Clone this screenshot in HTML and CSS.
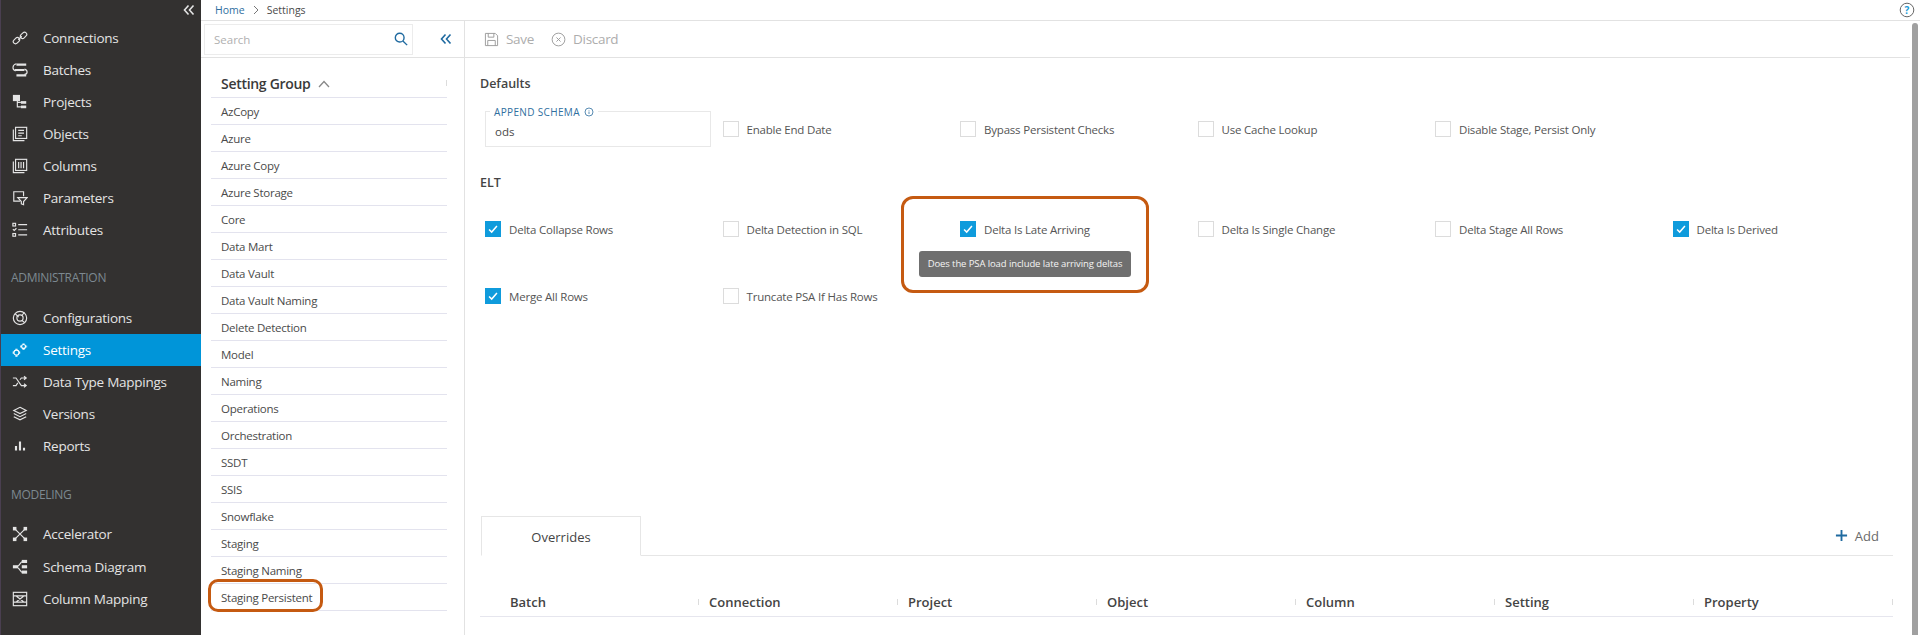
FILE: index.html
```html
<!DOCTYPE html>
<html lang="en">
<head>
<meta charset="UTF-8">
<meta name="viewport" content="width=device-width, initial-scale=1.0">
<title>Settings</title>
<link rel="stylesheet" href="styles.css">
</head>
<body>

<div class="app">
    <aside class="sidebar">
        <div class="sidebar-top">
            <svg class="collapse" viewBox="0 0 12 12"><path d="M5.500 1.500 1.500 6l4 4.500M10.500 1.500 6.500 6l4 4.500"/></svg>
        </div>
        <nav class="nav-group">
            <a class="nav-item"><svg viewBox="0 0 18 18"><rect x="1" y="9.500" width="8" height="5" rx="2.500" transform="rotate(-45 5 12)"/><rect x="9" y="3.500" width="8" height="5" rx="2.500" transform="rotate(-45 13 6)"/><path d="M7 11l4-4"/></svg>Connections</a>
            <a class="nav-item"><svg viewBox="0 0 18 18"><path class="thick" d="M5 3h11M3 9h11M5 15h11"/><path d="M5 2C0 3 0 9 4 10M14 8c4 1 4 6 0 6"/></svg>Batches</a>
            <a class="nav-item"><svg viewBox="0 0 18 18"><rect class="solid" x="1" y="1" width="8" height="7"/><rect class="solid" x="10" y="8" width="6" height="3"/><rect class="solid" x="10" y="13" width="6" height="3"/><path d="M6 8v6.500h4M6 9.500h4"/></svg>Projects</a>
            <a class="nav-item"><svg viewBox="0 0 18 18"><rect x="4" y="1.500" width="12.500" height="12.500"/><path d="M1.500 4v12.500h12.500M7 5h6.500M7 8h6.500M7 11h4"/></svg>Objects</a>
            <a class="nav-item"><svg viewBox="0 0 18 18"><rect x="4" y="1.500" width="12.500" height="12.500"/><path d="M1.500 4v12.500h12.500M7.500 4.500v7M10.200 4.500v7M13 4.500v7"/></svg>Columns</a>
            <a class="nav-item"><svg viewBox="0 0 18 18"><path d="M9 12.500H2V2h11v5"/><path d="M6.500 8.500h10.500l-4 4.500v3.500l-2.500-1V13z"/></svg>Parameters</a>
            <a class="nav-item"><svg viewBox="0 0 18 18"><rect x="1" y="1.500" width="3" height="3"/><rect x="1" y="13" width="3" height="3"/><path d="M1 8l1.500 1.500L5 7M7 3h10M7 8.700h10M7 14.500h10"/></svg>Attributes</a>
        </nav>
        <div class="nav-heading">ADMINISTRATION</div>
        <nav class="nav-group">
            <a class="nav-item"><svg viewBox="0 0 18 18"><circle cx="9" cy="9" r="7.500"/><circle cx="9" cy="9" r="3.500"/><path d="M3.500 4l4 4M11 6.500l3-4M11 11.500l3.500 3"/></svg>Configurations</a>
            <a class="nav-item active"><svg viewBox="0 0 18 18"><circle cx="5" cy="12" r="2.800"/><circle cx="13" cy="5" r="2.200"/><path class="thick" d="M5 7.500v1.200M5 15.300v1.200M.8 12H2M8 12h1.200M13 1v.8M13 8.200V9M9 5h.8M16.200 5h.8"/></svg>Settings</a>
            <a class="nav-item"><svg viewBox="0 0 18 18"><path d="M1 4.500h3.500l6 8.500h5M1 13h3.500l2-3M9 6.500l1.500-2h5M13.500 2.500l2.500 2-2.500 2M13.500 11l2.500 2-2.500 2"/></svg>Data Type Mappings</a>
            <a class="nav-item"><svg viewBox="0 0 18 18"><path d="M9 1.500 16 5l-7 3.500L2 5zM2 8.500 9 12l7-3.500M2 12l7 3.500 7-3.500"/></svg>Versions</a>
            <a class="nav-item"><svg viewBox="0 0 18 18"><path class="thick" d="M4.500 14V9M9 14V4M13.500 14v-3"/></svg>Reports</a>
        </nav>
        <div class="nav-heading nav-heading-second">MODELING</div>
        <nav class="nav-group">
            <a class="nav-item"><svg viewBox="0 0 18 18"><path d="M4 4l10 10M14 4 4 14"/><rect class="solid" x="1" y="1" width="4" height="4"/><rect class="solid" x="13" y="1" width="4" height="4"/><rect class="solid" x="1" y="13" width="4" height="4"/><rect class="solid" x="13" y="13" width="4" height="4"/></svg>Accelerator</a>
            <a class="nav-item nav-item-tall"><svg viewBox="0 0 18 18"><rect class="solid" x="1" y="7" width="6" height="3.500"/><rect class="solid" x="11" y="1" width="6" height="3.500"/><rect class="solid" x="11" y="7" width="6" height="3.500"/><rect class="solid" x="11" y="13" width="6" height="3.500"/><path d="M7 8l4-5M7 10l4 5"/></svg>Schema Diagram</a>
            <a class="nav-item"><svg viewBox="0 0 18 18"><rect x="1.500" y="1.500" width="15" height="15"/><path d="M1.500 5.500h15M1.500 12.500h15M5 6l8 6M13 6l-8 6"/></svg>Column Mapping</a>
        </nav>
    </aside>

    <div class="content">
        <header class="crumbs">
            <a class="crumb-link">Home</a>
            <svg class="crumb-sep" viewBox="0 0 8 10"><path d="M2 1l4 4-4 4"/></svg>
            <span>Settings</span>
            <svg class="help" viewBox="0 0 16 16"><circle cx="8" cy="8" r="6.800"/><text x="8" y="11.500" text-anchor="middle">?</text></svg>
        </header>

        <div class="panels">
            <section class="groups">
                <div class="groups-search">
                    <div class="search-box">
                        <span>Search</span>
                        <svg viewBox="0 0 16 16"><circle cx="6.500" cy="6.500" r="5"/><path d="M10.200 10.200 15 15"/></svg>
                    </div>
                    <svg class="groups-collapse" viewBox="0 0 12 12"><path d="M5.500 1.500 1.500 6l4 4.500M10.500 1.500 6.500 6l4 4.500"/></svg>
                </div>
                <div class="groups-head">
                    <span>Setting Group</span>
                    <svg viewBox="0 0 12 8"><path d="M1 7l5-5.500L11 7"/></svg>
                    <i class="tick"></i>
                </div>
                <ul class="groups-list">
                    <li>AzCopy</li>
                    <li>Azure</li>
                    <li>Azure Copy</li>
                    <li>Azure Storage</li>
                    <li>Core</li>
                    <li>Data Mart</li>
                    <li>Data Vault</li>
                    <li>Data Vault Naming</li>
                    <li>Delete Detection</li>
                    <li>Model</li>
                    <li>Naming</li>
                    <li>Operations</li>
                    <li>Orchestration</li>
                    <li>SSDT</li>
                    <li>SSIS</li>
                    <li>Snowflake</li>
                    <li>Staging</li>
                    <li>Staging Naming</li>
                    <li class="marked">Staging Persistent</li>
                </ul>
            </section>

            <main class="detail">
                <div class="toolbar">
                    <a class="tool"><svg viewBox="0 0 16 16"><path d="M1.500 1.500h10.500l2.500 2.500v10.500h-13zM4.500 1.500v4h6v-4M4 14.500V9h8v5.500"/></svg>Save</a>
                    <a class="tool"><svg viewBox="0 0 16 16"><circle cx="8" cy="8" r="6.800"/><path d="M5.800 5.800l4.400 4.400M10.200 5.800l-4.400 4.400"/></svg>Discard</a>
                </div>

                <h4 class="section-title">Defaults</h4>
                <div class="options options-defaults">
                    <div class="field">
                        <label class="field-label">APPEND SCHEMA <svg viewBox="0 0 10 10"><circle cx="5" cy="5" r="4"/><path d="M5 4.500v2.500M5 3v.6"/></svg></label>
                        <div class="field-value">ods</div>
                    </div>
                    <label class="option"><span class="box"></span>Enable End Date</label>
                    <label class="option"><span class="box"></span>Bypass Persistent Checks</label>
                    <label class="option"><span class="box"></span>Use Cache Lookup</label>
                    <label class="option"><span class="box"></span>Disable Stage, Persist Only</label>
                </div>

                <h4 class="section-title section-elt">ELT</h4>
                <div class="options options-elt">
                    <label class="option"><span class="box checked"><svg viewBox="0 0 16 16"><path d="M3.500 8.500l3 3 6-7"/></svg></span>Delta Collapse Rows</label>
                    <label class="option"><span class="box"></span>Delta Detection in SQL</label>
                    <label class="option has-tip">
                        <span class="box checked"><svg viewBox="0 0 16 16"><path d="M3.500 8.500l3 3 6-7"/></svg></span>Delta Is Late Arriving
                        <span class="tip">Does the PSA load include late arriving deltas</span>
                        <span class="callout"></span>
                    </label>
                    <label class="option"><span class="box"></span>Delta Is Single Change</label>
                    <label class="option"><span class="box"></span>Delta Stage All Rows</label>
                    <label class="option"><span class="box checked"><svg viewBox="0 0 16 16"><path d="M3.500 8.500l3 3 6-7"/></svg></span>Delta Is Derived</label>
                    <label class="option"><span class="box checked"><svg viewBox="0 0 16 16"><path d="M3.500 8.500l3 3 6-7"/></svg></span>Merge All Rows</label>
                    <label class="option"><span class="box"></span>Truncate PSA If Has Rows</label>
                </div>

                <div class="tabs">
                    <div class="tab">Overrides</div>
                    <a class="add"><svg viewBox="0 0 14 14"><path d="M7 1v12M1 7h12"/></svg>Add</a>
                </div>
                <div class="override-head">
                    <span>Batch</span>
                    <span>Connection</span>
                    <span>Project</span>
                    <span>Object</span>
                    <span>Column</span>
                    <span>Setting</span>
                    <span>Property</span>
                </div>
            </main>
            <div class="scrollbar"></div>
        </div>
    </div>
</div>

</body>
</html>
```

FILE: styles.css
```css
* {
    box-sizing: border-box;
}
html, body {
    margin: 0;
    height: 635px;
    overflow: hidden;
}
body {
    font-family: "Open Sans", "Noto Sans", sans-serif;
    font-size: 12px;
    color: #4a4a4a;
    background-color: #fff;
}
svg {
    fill: none;
    stroke: currentColor;
    stroke-width: 1.3;
}
.app {
    display: flex;
    height: 635px;
}

/* sidebar */
.sidebar {
    width: 201px;
    flex: none;
    background-color: #333130;
    border-left: 1px solid #4a3f50;
    color: #e4e4e4;
}
.sidebar-top {
    height: 22px;
    display: flex;
    justify-content: flex-end;
    padding: 4px 6px 0 0;
}
.collapse {
    width: 12px;
    height: 12px;
    stroke-width: 1.6;
}
.nav-group {
    display: flex;
    flex-direction: column;
}
.nav-item {
    height: 32px;
    display: flex;
    align-items: center;
    gap: 15px;
    padding-left: 11px;
    font-size: 13.5px;
    letter-spacing: -0.25px;
}
.nav-item-tall {
    height: 33px;
}
.nav-item svg {
    width: 16px;
    height: 16px;
    flex: none;
}
.nav-item.active {
    background-color: #0095d9;
    color: #fff;
}
.thick {
    stroke-width: 2.4;
}
.solid {
    fill: currentColor;
    stroke: none;
}
.nav-heading {
    height: 16px;
    line-height: 16px;
    margin: 24px 0 16px;
    padding-left: 10px;
    font-size: 12px;
    letter-spacing: -0.3px;
    color: #7d8990;
}
.nav-heading-second {
    margin: 25px 0 15px;
}

/* header */
.content {
    flex: 1;
    min-width: 0;
    display: flex;
    flex-direction: column;
}
.crumbs {
    height: 21px;
    flex: none;
    display: flex;
    align-items: center;
    gap: 7px;
    padding: 0 5px 0 14px;
    border-bottom: 1px solid #e2e2e2;
    font-size: 10.500px;
}
.crumb-link {
    color: #2f6f9f;
}
.crumb-sep {
    width: 8px;
    height: 10px;
    color: #777;
    stroke-width: 1;
}
.help {
    width: 16px;
    height: 16px;
    margin-left: auto;
    color: #666;
    stroke-width: 1;
}
.help text {
    font-size: 10px;
    font-weight: 700;
    fill: #1c9ad6;
    stroke: none;
}
.panels {
    flex: 1;
    display: flex;
    min-height: 0;
}

/* setting groups */
.groups {
    width: 264px;
    flex: none;
    border-right: 1px solid #e2e2e2;
}
.groups-search {
    height: 37px;
    display: flex;
    align-items: center;
    border-bottom: 1px solid #e2e2e2;
    padding: 0 0 0 3px;
}
.search-box {
    width: 209px;
    height: 31px;
    display: flex;
    align-items: center;
    justify-content: space-between;
    padding: 0 4px 0 9px;
    border: 1px solid #ececec;
    font-size: 11.500px;
    color: #b0b0b0;
}
.search-box svg {
    width: 14px;
    height: 14px;
    color: #1f6aa0;
    stroke-width: 1.6;
}
.groups-collapse {
    width: 12px;
    height: 12px;
    margin-left: 27px;
    color: #1f6aa0;
    stroke-width: 1.6;
}
.groups-head {
    position: relative;
    height: 40px;
    margin: 0 17px 0 10px;
    padding: 12px 0 0 10px;
    display: flex;
    align-items: center;
    gap: 7px;
    border-bottom: 1px solid #e3e3ee;
    font-size: 14px;
    font-weight: 600;
    letter-spacing: -0.3px;
    color: #3a3a3a;
}
.groups-head svg {
    width: 12px;
    height: 8px;
    color: #888;
}
.tick {
    position: absolute;
    right: 0;
    top: 22px;
    width: 1px;
    height: 6px;
    background-color: #dcdcdc;
}
.groups-list {
    list-style: none;
    margin: 0 17px 0 10px;
    padding: 0;
}
.groups-list li {
    height: 27px;
    line-height: 27px;
    padding-left: 10px;
    border-bottom: 1px solid #e3e3ee;
    font-size: 11.500px;
    letter-spacing: -0.25px;
}
.groups-list .marked {
    position: relative;
}
.groups-list .marked::after {
    content: "";
    position: absolute;
    left: -3px;
    top: -5px;
    width: 115px;
    height: 33px;
    box-sizing: border-box;
    border: 3px solid #c55a11;
    border-radius: 10px;
}

/* detail */
.detail {
    flex: 1;
    min-width: 0;
    padding-right: 2px;
}
.toolbar {
    height: 37px;
    display: flex;
    align-items: center;
    gap: 17px;
    padding-left: 19px;
    border-bottom: 1px solid #e2e2e2;
}
.tool {
    display: flex;
    align-items: center;
    gap: 7px;
    font-size: 13.500px;
    letter-spacing: -0.3px;
    color: #adadad;
}
.tool svg {
    width: 15px;
    height: 15px;
    color: #9a9a9a;
    stroke-width: 1;
}
.section-title {
    margin: 16px 0 0 15px;
    height: 20px;
    line-height: 20px;
    font-size: 12.500px;
    font-weight: 600;
    color: #444;
}
.section-elt {
    margin-top: 26px;
}
.options {
    display: grid;
    grid-template-columns: repeat(6, 237.5px);
    margin-left: 20px;
}
.options-defaults {
    margin-top: 17px;
    height: 36px;
    align-items: center;
}
.options-elt {
    margin-top: 24px;
    grid-auto-rows: 24px;
    row-gap: 43px;
}
.field {
    position: relative;
    width: 226px;
    height: 36px;
    padding: 12px 9px 0;
    border: 1px solid #e8e8e8;
}
.field-label {
    position: absolute;
    left: 4px;
    top: -7px;
    display: flex;
    align-items: center;
    gap: 4px;
    padding: 0 4px;
    background-color: #fff;
    font-size: 10px;
    letter-spacing: 0.35px;
    color: #2f6f9f;
}
.field-label svg {
    width: 10px;
    height: 10px;
    stroke-width: 0.8;
}
.field-value {
    font-size: 11.500px;
    line-height: 16px;
}
.option {
    position: relative;
    display: flex;
    align-items: center;
    height: 24px;
    gap: 8px;
    font-size: 11.500px;
    letter-spacing: -0.2px;
    color: #555;
}
.box {
    width: 16px;
    height: 16px;
    flex: none;
    border: 1px solid #dcdcdc;
    background-color: #fff;
}
.box.checked {
    background-color: #0f9bdc;
    border-color: #0f9bdc;
    color: #fff;
}
.box svg {
    display: block;
    width: 14px;
    height: 14px;
    stroke-width: 1.7;
}
.tip {
    position: absolute;
    left: -41px;
    top: 34px;
    width: 212px;
    height: 26px;
    line-height: 26px;
    text-align: center;
    white-space: nowrap;
    background-color: #6f6f6f;
    border-radius: 3px;
    color: #f4f4f4;
    font-size: 9.500px;
    letter-spacing: -0.1px;
}
.callout {
    position: absolute;
    left: -59px;
    top: -21px;
    width: 248px;
    height: 97px;
    border: 3px solid #c55a11;
    border-radius: 12px;
}

/* overrides */
.tabs {
    display: flex;
    justify-content: space-between;
    align-items: center;
    margin: 208px 17px 0 16px;
    height: 40px;
    border-bottom: 1px solid #e6e6e6;
}
.tab {
    width: 160px;
    height: 40px;
    line-height: 40px;
    margin-bottom: -1px;
    text-align: center;
    font-size: 13px;
    color: #444;
    background-color: #fff;
    border: 1px solid #e6e6e6;
    border-bottom: 1px solid #fff;
}
.add {
    display: flex;
    align-items: center;
    gap: 7px;
    padding-right: 14px;
    font-size: 13px;
    color: #6a6a6a;
}
.add svg {
    width: 13px;
    height: 13px;
    color: #1f6aa0;
    stroke-width: 2;
}
.override-head {
    display: grid;
    grid-template-columns: repeat(7, 199px);
    margin: 37px 17px 0 15px;
    height: 24px;
    padding-left: 30px;
    border-bottom: 1px solid #e6e6ee;
    font-size: 13px;
    font-weight: 600;
    color: #444;
}
.override-head span {
    position: relative;
}
.override-head span::after {
    content: "";
    position: absolute;
    right: 10px;
    top: 6px;
    width: 1px;
    height: 6px;
    background-color: #dcdcdc;
}
.scrollbar {
    width: 6px;
    flex: none;
    margin: 2px 2px 0 0;
    background-color: #a0a0a0;
    border-radius: 3px 3px 0 0;
}
```
